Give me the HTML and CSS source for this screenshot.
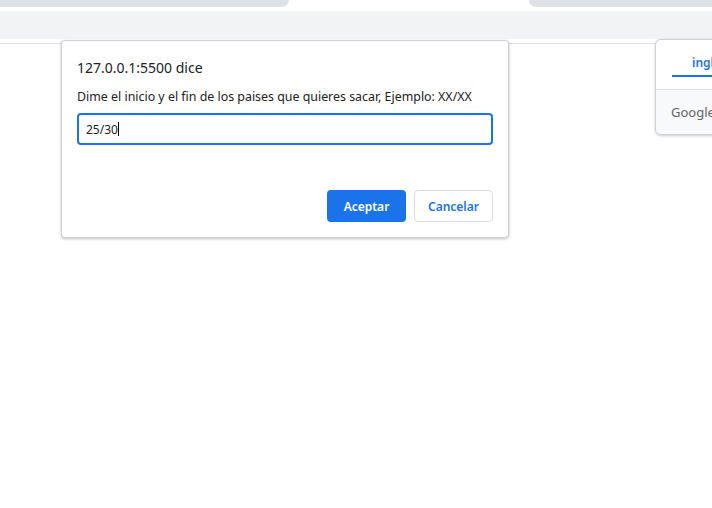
FILE: index.html
```html
<!DOCTYPE html>
<html lang="es">
<head>
<meta charset="utf-8">
<title>Prompt</title>
<link rel="stylesheet" href="styles.css">
</head>
<body>
  <div class="tabstrip">
    <div class="tab tab-left"></div>
    <div class="tab tab-right"></div>
  </div>
  <div class="toolbar"></div>
  <div class="content-top"></div>

  <div class="dialog">
    <div class="dialog-title">127.0.0.1:5500 dice</div>
    <div class="dialog-msg">Dime el inicio y el fin de los paises que quieres sacar, Ejemplo: XX/XX</div>
    <div class="dialog-input"><span class="input-text">25/30</span><span class="caret"></span></div>
    <div class="dialog-actions">
      <button class="btn btn-primary">Aceptar</button>
      <button class="btn btn-secondary">Cancelar</button>
    </div>
  </div>

  <div class="translate">
    <div class="translate-tabs"><span class="translate-tab">inglés</span></div>
    <div class="translate-foot"><span class="translate-brand">Google Translate</span></div>
  </div>
</body>
</html>
```

FILE: styles.css
```css
html, body {
  margin: 0;
  padding: 0;
  background: #ffffff;
  width: 712px;
  height: 508px;
  overflow: hidden;
  font-family: "Noto Sans", "Open Sans", sans-serif;
}

.tabstrip {
  height: 11px;
  display: flex;
  justify-content: space-between;
  background: #ffffff;
}
.tab {
  height: 7px;
  background: #dee1e6;
}
.tab-left {
  width: 289px;
  border-bottom-right-radius: 8px;
}
.tab-right {
  width: 183px;
  border-bottom-left-radius: 8px;
}

.toolbar {
  height: 28px;
  background: #f1f3f4;
}
.content-top {
  height: 4px;
  border-bottom: 1px solid #dadce0;
}

.dialog {
  position: absolute;
  left: 61px;
  top: 40px;
  width: 416px;
  height: 166px;
  padding: 15px;
  background: #ffffff;
  border: 1px solid #d0d0d0;
  border-radius: 4px;
  box-shadow: 0 1px 3px rgba(0,0,0,0.25);
  display: flex;
  flex-direction: column;
}
.dialog-title {
  font-size: 14px;
  color: #202124;
  line-height: 20px;
  margin-top: 2px;
}
.dialog-msg {
  font-size: 12.4px;
  color: #202124;
  line-height: 16px;
  margin-top: 11px;
}
.dialog-input {
  margin-top: 8px;
  height: 28px;
  border: 2px solid #1a73e8;
  border-radius: 4px;
  display: flex;
  align-items: center;
  padding-left: 7px;
  font-size: 12px;
  color: #202124;
}
.caret {
  display: inline-block;
  width: 1px;
  height: 14px;
  background: #000;
}
.dialog-actions {
  margin-top: auto;
  display: flex;
  justify-content: flex-end;
  gap: 8px;
}
.btn {
  width: 79px;
  height: 32px;
  border-radius: 4px;
  font-family: "Noto Sans", "Open Sans", sans-serif;
  font-size: 12px;
  font-weight: 600;
  padding: 0;
  cursor: pointer;
}
.btn-primary {
  background: #1a73e8;
  color: #ffffff;
  border: none;
}
.btn-secondary {
  background: #ffffff;
  color: #1a73e8;
  border: 1px solid #dadce0;
}

.translate {
  position: absolute;
  left: 655px;
  top: 39px;
  width: 120px;
  height: 94px;
  background: #ffffff;
  border: 1px solid #d0d0d0;
  border-radius: 6px;
  box-shadow: 0 1px 3px rgba(0,0,0,0.2);
  overflow: hidden;
  display: flex;
  flex-direction: column;
}
.translate-tabs {
  height: 49px;
  border-bottom: 1px solid #dadce0;
  padding-left: 16px;
  display: flex;
}
.translate-tab {
  display: block;
  padding: 14px 0 0 20px;
  width: 80px;
  color: #1a73e8;
  font-size: 12px;
  font-weight: 600;
  border-bottom: 2px solid #1a73e8;
  height: 21px;
}
.translate-foot {
  flex: 1;
  background: #f8f9fa;
  padding-left: 15px;
  display: flex;
  align-items: center;
}
.translate-brand {
  color: #5f6368;
  font-size: 13px;
  white-space: nowrap;
}
```
